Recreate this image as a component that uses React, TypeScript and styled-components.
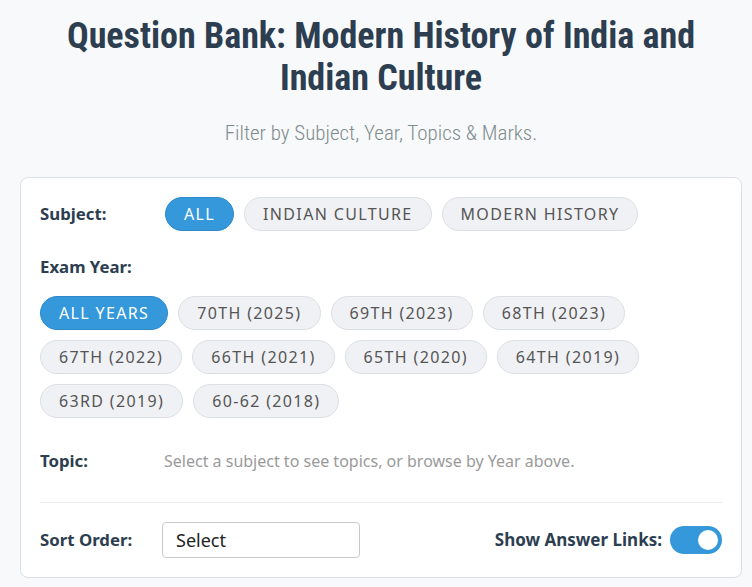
import React, { useState } from "react";
import styled, { createGlobalStyle } from "styled-components";

const Global = createGlobalStyle`
  html, body { margin: 0; padding: 0; background: #f8f9fa; }
  body { font-family: "Noto Sans", "Open Sans", sans-serif; color: #2c3e50; }
  * { box-sizing: border-box; }
`;

const Page = styled.div`
  padding: 15px 10px 10px 20px;
  display: flex;
  flex-direction: column;
  align-items: stretch;
`;

const Title = styled.h1`
  margin: 0;
  text-align: center;
  font-family: "Roboto Condensed", "Liberation Sans Narrow", "DejaVu Sans Condensed", sans-serif;
  font-stretch: condensed;
  font-weight: 700;
  font-size: 36px;
  line-height: 42px;
  color: #2c3e50;
  padding: 0 30px;
`;

const Subtitle = styled.p`
  margin: 21px 0 31px;
  text-align: center;
  font-family: "Roboto Condensed", "Liberation Sans Narrow", "DejaVu Sans Condensed", sans-serif;
  font-stretch: condensed;
  font-weight: 300;
  font-size: 21px;
  line-height: 26px;
  color: #7f8c8d;
`;

const Card = styled.div`
  background: #fff;
  border: 1px solid #dcdfe3;
  border-radius: 8px;
  padding: 19px 19px 19px 19px;
  display: flex;
  flex-direction: column;
`;

const Row = styled.div<{ $mb?: number; $mt?: number }>`
  display: flex;
  align-items: center;
  margin-top: ${(p) => p.$mt ?? 0}px;
  margin-bottom: ${(p) => p.$mb ?? 0}px;
`;

const Label = styled.div<{ $w?: number }>`
  font-weight: 700;
  font-size: 16.8px;
  line-height: 24px;
  color: #2c3e50;
  flex: 0 0 ${(p) => (p.$w ? `${p.$w}px` : "auto")};
`;

const BlockLabel = styled(Label)`
  margin: 0 0 17px;
`;

const Chips = styled.div`
  display: flex;
  flex-wrap: wrap;
  gap: 10px;
`;

const Chip = styled.button<{ $active?: boolean }>`
  height: 34px;
  padding: 0 18px;
  border-radius: 17px;
  border: 1px solid ${(p) => (p.$active ? "#2f89c9" : "#dcdfe3")};
  background: ${(p) => (p.$active ? "#3498db" : "#f0f1f4")};
  color: ${(p) => (p.$active ? "#fff" : "#555")};
  font-family: "Noto Sans", "Open Sans", sans-serif;
  font-size: 16px;
  letter-spacing: 1.35px;
  text-transform: uppercase;
  cursor: pointer;
  line-height: 1;
`;

const Hint = styled.div`
  font-size: 16px;
  color: #9a9a9a;
  line-height: 24px;
`;

const Divider = styled.hr`
  border: none;
  border-top: 1px solid #e8eaed;
  margin: 0 0 19px;
  width: 100%;
`;

const SelectBox = styled.div`
  width: 198px;
  height: 36px;
  border: 1px solid #c8c8c8;
  border-radius: 4px;
  display: flex;
  align-items: center;
  padding: 0 13px;
  font-size: 18px;
  color: #222;
`;

const Spacer = styled.div`
  flex: 1;
`;

const ToggleLabel = styled(Label)`
  font-size: 17px;
  margin-right: 8px;
`;

const Toggle = styled.button<{ $on: boolean }>`
  width: 52px;
  height: 28px;
  border-radius: 14px;
  border: none;
  padding: 0;
  background: ${(p) => (p.$on ? "#3498db" : "#ccc")};
  position: relative;
  cursor: pointer;
  &::after {
    content: "";
    position: absolute;
    top: 4px;
    left: ${(p) => (p.$on ? "28px" : "4px")};
    width: 20px;
    height: 20px;
    border-radius: 50%;
    background: #fff;
  }
`;

const subjects = ["All", "Indian Culture", "Modern History"];
const years = [
  "All Years",
  "70th (2025)",
  "69th (2023)",
  "68th (2023)",
  "67th (2022)",
  "66th (2021)",
  "65th (2020)",
  "64th (2019)",
  "63rd (2019)",
  "60-62 (2018)",
];

export default function App() {
  const [subject, setSubject] = useState("All");
  const [year, setYear] = useState("All Years");
  const [on, setOn] = useState(true);
  return (
    <>
      <Global />
      <Page>
        <Title>Question Bank: Modern History of India and Indian Culture</Title>
        <Subtitle>Filter by Subject, Year, Topics &amp; Marks.</Subtitle>
        <Card>
          <Row $mb={24}>
            <Label $w={125}>Subject:</Label>
            <Chips>
              {subjects.map((s) => (
                <Chip key={s} $active={s === subject} onClick={() => setSubject(s)}>
                  {s}
                </Chip>
              ))}
            </Chips>
          </Row>
          <BlockLabel>Exam Year:</BlockLabel>
          <Chips>
            {years.map((y) => (
              <Chip key={y} $active={y === year} onClick={() => setYear(y)}>
                {y}
              </Chip>
            ))}
          </Chips>
          <Row $mt={31} $mb={29}>
            <Label $w={124}>Topic:</Label>
            <Hint>Select a subject to see topics, or browse by Year above.</Hint>
          </Row>
          <Divider />
          <Row>
            <Label $w={122}>Sort Order:</Label>
            <SelectBox>Select</SelectBox>
            <Spacer />
            <ToggleLabel>Show Answer Links:</ToggleLabel>
            <Toggle $on={on} onClick={() => setOn(!on)} aria-label="Show Answer Links" />
          </Row>
        </Card>
      </Page>
    </>
  );
}
